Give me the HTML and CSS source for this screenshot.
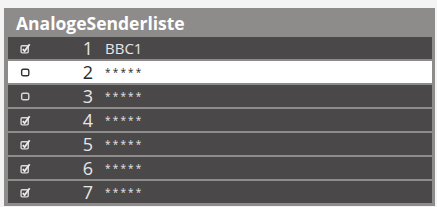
FILE: index.html
```html
<!DOCTYPE html>
<html lang="de">
<head>
    <meta charset="UTF-8">
    <title>AnalogeSenderliste</title>
    <link rel="stylesheet" href="styles.css">
</head>
<body>
    <div class="panel">
        <div class="panel-title">AnalogeSenderliste</div>
        <div class="list">
            <div class="row">
                <svg class="box" viewBox="0 0 10 10"><rect x="1" y="2.5" width="6.5" height="6.5" rx="1"/><path class="tick" d="M2.5 5.5 L4.2 7.3 L8.8 1.2"/></svg>
                <span class="num">1</span><span class="name big">BBC1</span>
            </div>
            <div class="row selected">
                <svg class="box" viewBox="0 0 10 10"><rect x="1.5" y="2" width="6.5" height="6" rx="1.5"/></svg>
                <span class="num">2</span><span class="name">*****</span>
            </div>
            <div class="row">
                <svg class="box" viewBox="0 0 10 10"><rect x="1.5" y="2" width="6.5" height="6" rx="1.5"/></svg>
                <span class="num">3</span><span class="name">*****</span>
            </div>
            <div class="row">
                <svg class="box" viewBox="0 0 10 10"><rect x="1" y="2.5" width="6.5" height="6.5" rx="1"/><path class="tick" d="M2.5 5.5 L4.2 7.3 L8.8 1.2"/></svg>
                <span class="num">4</span><span class="name">*****</span>
            </div>
            <div class="row">
                <svg class="box" viewBox="0 0 10 10"><rect x="1" y="2.5" width="6.5" height="6.5" rx="1"/><path class="tick" d="M2.5 5.5 L4.2 7.3 L8.8 1.2"/></svg>
                <span class="num">5</span><span class="name">*****</span>
            </div>
            <div class="row">
                <svg class="box" viewBox="0 0 10 10"><rect x="1" y="2.5" width="6.5" height="6.5" rx="1"/><path class="tick" d="M2.5 5.5 L4.2 7.3 L8.8 1.2"/></svg>
                <span class="num">6</span><span class="name">*****</span>
            </div>
            <div class="row">
                <svg class="box" viewBox="0 0 10 10"><rect x="1" y="2.5" width="6.5" height="6.5" rx="1"/><path class="tick" d="M2.5 5.5 L4.2 7.3 L8.8 1.2"/></svg>
                <span class="num">7</span><span class="name">*****</span>
            </div>
        </div>
    </div>
</body>
</html>
```

FILE: styles.css
```css
/* Page */
body {
    margin: 0;
    background-color: #f4f4f4;
    font-family: "Open Sans", "DejaVu Sans", sans-serif;
    overflow: hidden;
}

/* Channel list panel */
.panel {
    margin: 8px 2px 0 4px;
    background-color: #8e8b8b;
    padding: 0 3px 3px 4px;
}
.panel-title {
    height: 29px;
    line-height: 30px;
    padding-left: 8px;
    color: #ffffff;
    font-size: 17.5px;
    font-weight: bold;
}

/* Rows */
.list {
    display: flex;
    flex-direction: column;
    gap: 2px;
}
.row {
    display: flex;
    align-items: center;
    height: 22px;
    background-color: #4b4849;
    color: #e6e6e6;
}
.row.selected {
    background-color: #ffffff;
    color: #2a2a2a;
}
.box {
    width: 11px;
    height: 11px;
    margin-left: 12px;
    fill: none;
    stroke: #d8d8d8;
    stroke-width: 1.3;
}
.box .tick {
    stroke: #eeeeee;
    stroke-width: 1.6;
}
.row.selected .box {
    stroke: #333333;
}
.num {
    width: 62px;
    text-align: right;
    font-size: 18px;
    line-height: 22px;
}
.name {
    margin-left: 12px;
    font-size: 10px;
    letter-spacing: 2.2px;
}
.name.big {
    font-size: 15px;
    letter-spacing: 0;
}
```
